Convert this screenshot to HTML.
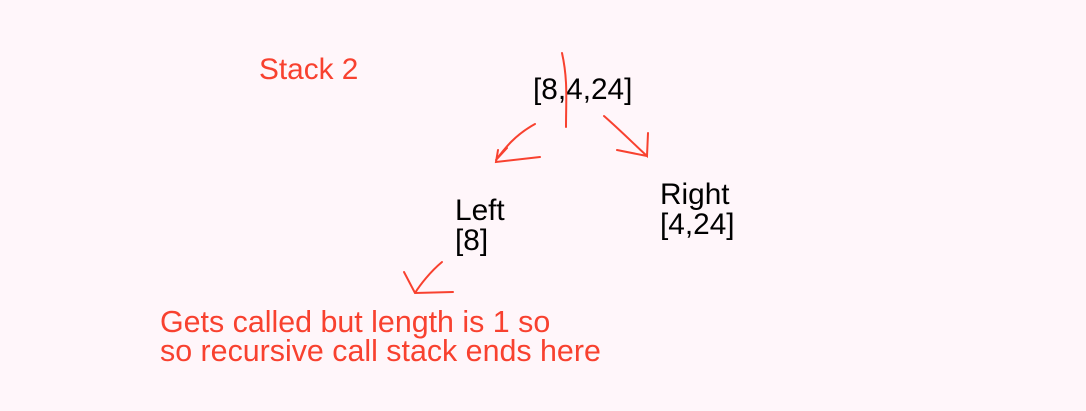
<!DOCTYPE html>
<html><head><style>
body{margin:0;width:1086px;height:411px;background:#fff6fa;position:relative;overflow:hidden;font-family:"Liberation Sans",sans-serif}
.t{position:absolute;font-size:29.8px;line-height:30px;white-space:nowrap}
.r{color:#f8412f}
.k{color:#000}
svg{position:absolute;left:0;top:0}
</style></head><body>
<div class="t r" style="left:259px;top:55px">Stack 2</div>
<div class="t k" style="left:533px;top:75px">[8,4,24]</div>
<div class="t k" style="left:660px;top:180px">Right<br>[4,24]</div>
<div class="t k" style="left:455px;top:196px">Left<br>[8]</div>
<div class="t r" style="left:160px;top:308px;line-height:29px;font-size:30.4px">Gets called but length is 1 so<br>so recursive call stack ends here</div>
<svg width="1086" height="411" fill="none" stroke="#f8412f" stroke-width="2" stroke-linecap="round">
<path d="M562 53 C568 80 566 100 566 127"/>
<path d="M535 124 C515 135 505 148 496 160 M498 150 L496 162 L540 157 M496 160 L507 148"/>
<path d="M604 116 C620 130 635 145 647 156 L648 133 M647 156 L617 150"/>
<path d="M442 262 C430 272 420 285 415 293 M404 272 L415 293 L453 292"/>
</svg>
</body></html>
